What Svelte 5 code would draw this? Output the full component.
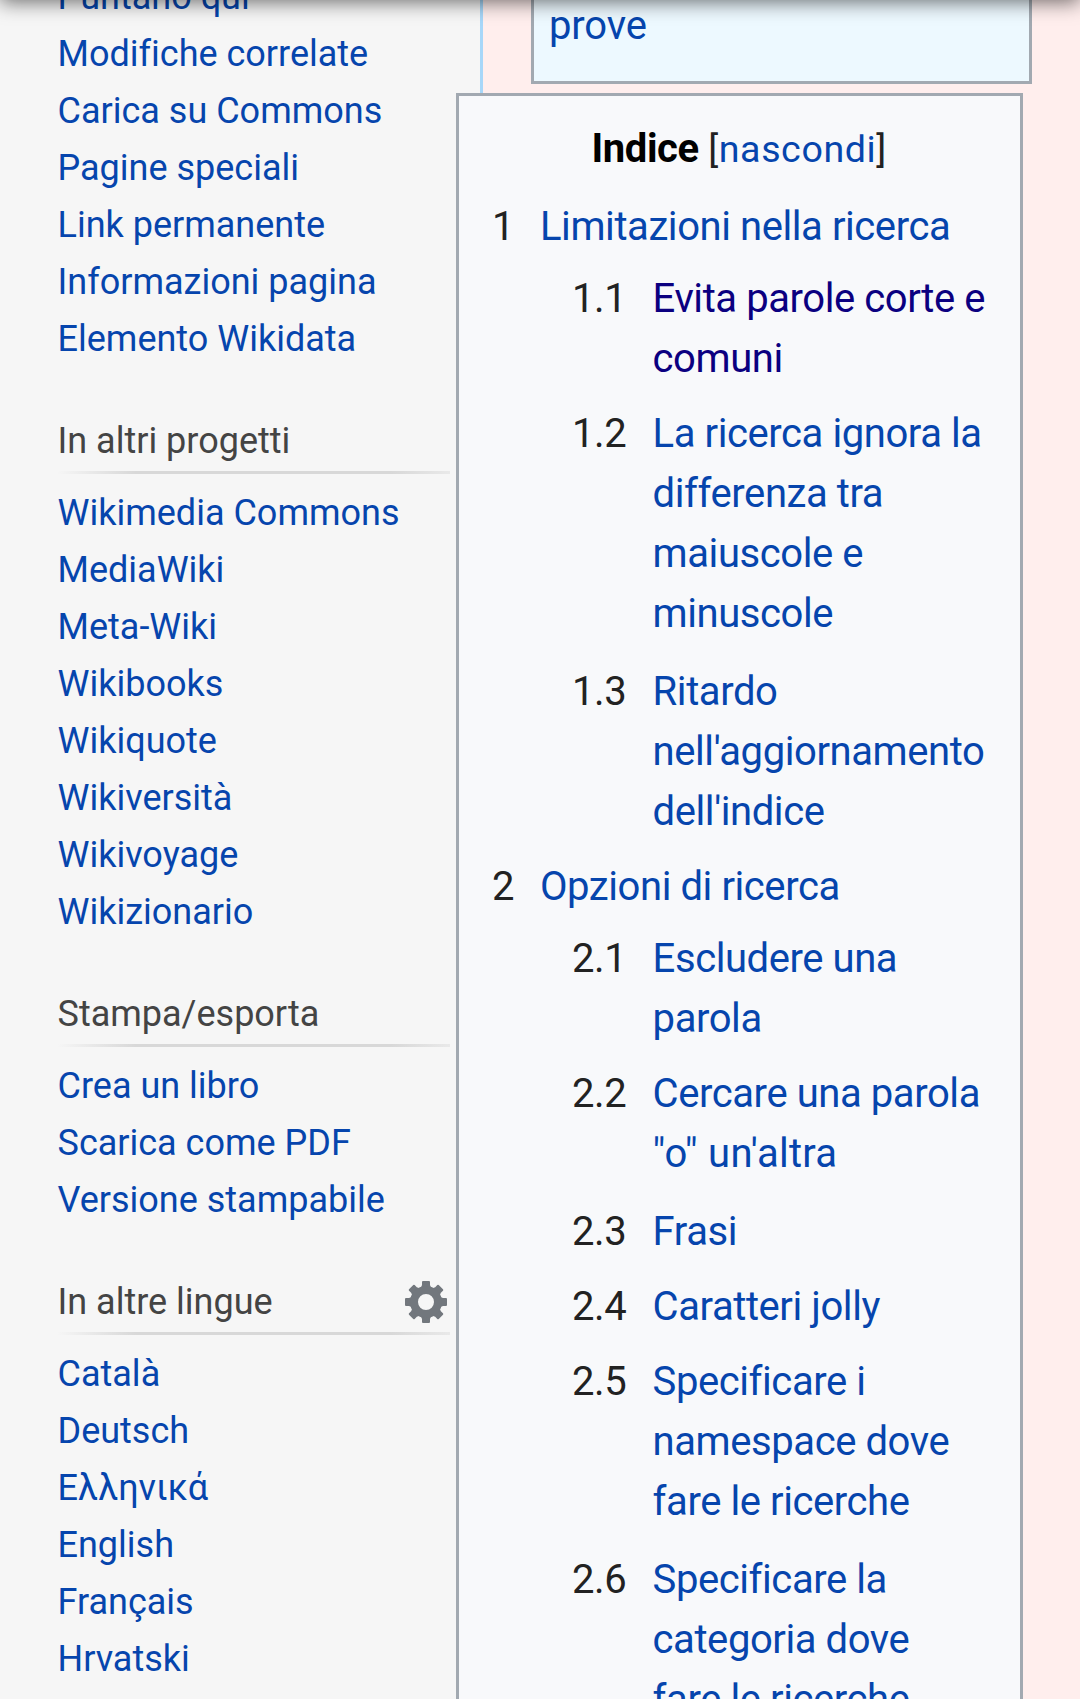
<script>
  const tools = [
    'Puntano qui', 'Modifiche correlate', 'Carica su Commons', 'Pagine speciali',
    'Link permanente', 'Informazioni pagina', 'Elemento Wikidata'
  ];

  const portals = [
    {
      title: 'In altri progetti',
      links: [
        'Wikimedia Commons', 'MediaWiki', 'Meta-Wiki', 'Wikibooks',
        'Wikiquote', 'Wikiversità', 'Wikivoyage', 'Wikizionario'
      ]
    },
    {
      title: 'Stampa/esporta',
      links: ['Crea un libro', 'Scarica come PDF', 'Versione stampabile']
    },
    {
      title: 'In altre lingue',
      settings: true,
      links: ['Català', 'Deutsch', 'Ελληνικά', 'English', 'Français', 'Hrvatski']
    }
  ];

  const sections = [
    {
      title: 'Limitazioni nella ricerca',
      children: [
        { lines: ['Evita parole corte e', 'comuni'], visited: true },
        { lines: ['La ricerca ignora la', 'differenza tra', 'maiuscole e', 'minuscole'] },
        { lines: ['Ritardo', "nell'aggiornamento", "dell'indice"], wide: true }
      ]
    },
    {
      title: 'Opzioni di ricerca',
      children: [
        { lines: ['Escludere una', 'parola'] },
        { lines: ['Cercare una parola', '"o" un\'altra'] },
        { lines: ['Frasi'], wide: true },
        { lines: ['Caratteri jolly'] },
        { lines: ['Specificare i', 'namespace dove', 'fare le ricerche'] },
        { lines: ['Specificare la', 'categoria dove', 'fare le ricerche'], wide: true }
      ]
    }
  ];

  const teeth = [0, 45, 90, 135, 180, 225, 270, 315];
</script>

<div class="page">
  <nav class="sidebar">
    <ul class="links">
      {#each tools as link}<li><a>{link}</a></li>{/each}
    </ul>
    {#each portals as portal}
      <section class="portal">
        <h3>
          <span>{portal.title}</span>
          {#if portal.settings}
            <svg class="gear" viewBox="-21 -21 42 42" aria-hidden="true">
              {#each teeth as angle}
                <path d="M-5.6 -13 L-4 -17 V-20 Q-4 -21 -3 -21 H3 Q4 -21 4 -20 V-17 L5.6 -13Z" transform={`rotate(${angle})`} />
              {/each}
              <circle r="12" class="ring" />
            </svg>
          {/if}
        </h3>
        <ul class="links">
          {#each portal.links as link}<li><a>{link}</a></li>{/each}
        </ul>
      </section>
    {/each}
  </nav>

  <main class="content">
    <div class="notice"><a>prove</a></div>
    <div class="toc">
      <div class="toc-head">
        <h2>Indice</h2>
        <span class="toggle">[<a>nascondi</a>]</span>
      </div>
      <ol>
        {#each sections as section, i}
          <li class="section">
            <div class="row"><span class="num">{i + 1}</span><a>{section.title}</a></div>
            <ol class="nested">
              {#each section.children as child, j}
                <li class="row" class:wide={child.wide}>
                  <span class="num">{i + 1}.{j + 1}</span>
                  <a class:visited={child.visited}>
                    {#each child.lines as line}<span class="line" class:quoted={line.startsWith('"')}>{line}</span>{/each}
                  </a>
                </li>
              {/each}
            </ol>
          </li>
        {/each}
      </ol>
    </div>
  </main>
  <div class="shade"></div>
</div>

<style>
  :global(body) { margin: 0; background: #f6f6f6; }
  .page {
    position: relative;
    display: flex;
    width: 1080px;
    height: 1699px;
    overflow: hidden;
    background: #f6f6f6;
    font-family: Roboto, "Liberation Sans", sans-serif;
    font-variant-ligatures: none;
    color: #222;
  }
  ul, ol { list-style: none; margin: 0; padding: 0; }
  a { color: #0645ad; text-decoration: none; }
  .sidebar {
    flex: none;
    box-sizing: border-box;
    width: 480px;
    padding: 0 30px 0 57px;
    font-size: 36px;
    line-height: 57px;
    white-space: nowrap;
  }
  .sidebar > .links { margin-top: -31px; }
  .portal { margin-top: 45px; }
  h3 {
    display: flex;
    justify-content: space-between;
    box-sizing: border-box;
    height: 61px;
    margin: 0 0 11px;
    padding-left: 0.5px;
    font-size: 36px;
    font-weight: 400;
    color: #444;
    background: linear-gradient(to right, #f6f6f6 0%, #d8d8d8 20%, #d8d8d8 85%, #e9e9e9 100%) bottom / 100% 3px no-repeat;
  }
  .links li { height: 57px; padding-left: 0.5px; }
  .gear { width: 42px; height: 42px; margin: 7px 3px 0 0; fill: #72777d; }
  .ring { fill: none; stroke: #72777d; stroke-width: 8; }
  .content {
    flex: none;
    box-sizing: border-box;
    width: 600px;
    border-left: 3px solid #a7d7f9;
    background: #ffeeed;
    font-size: 40px;
    letter-spacing: -0.42px;
    line-height: 60px;
  }
  .notice {
    box-sizing: border-box;
    width: 501px;
    height: 84px;
    margin-left: 48px;
    padding-left: 15px;
    border: solid #a2a9b1;
    border-width: 0 3px 3px;
    background: #edf9ff;
    letter-spacing: -0.15px;
    line-height: 52px;
  }
  .toc {
    box-sizing: border-box;
    width: 567px;
    height: 1700px;
    margin: 9px 0 0 -27px;
    padding: 23px 0 0 33px;
    border: 3px solid #a2a9b1;
    background: #f8f9fb;
    white-space: nowrap;
  }
  .toc-head {
    display: flex;
    align-items: baseline;
    gap: 9.5px;
    height: 60px;
    margin: 0 0 18px 99.5px;
  }
  h2 { margin: 0; font-size: 40px; font-weight: 700; color: #000; }
  .toggle { font-size: 37.6px; letter-spacing: 0.6px; }
  .row { display: flex; }
  .num { flex: none; width: 48px; }
  .nested { padding: 12px 0 0 80px; }
  .nested .num { width: 80.6px; }
  .nested .row + .row, .section + .section { margin-top: 15px; }
  .nested .row.wide { margin-top: 18px; }
  .line { display: block; }
  .quoted { letter-spacing: 0.25px; }
  .visited { color: #0b0080; }
  .shade {
    position: absolute;
    left: 0;
    right: 0;
    top: -40px;
    height: 40px;
    box-shadow: 0 2px 20px rgba(0, 0, 0, 0.58);
  }
</style>
